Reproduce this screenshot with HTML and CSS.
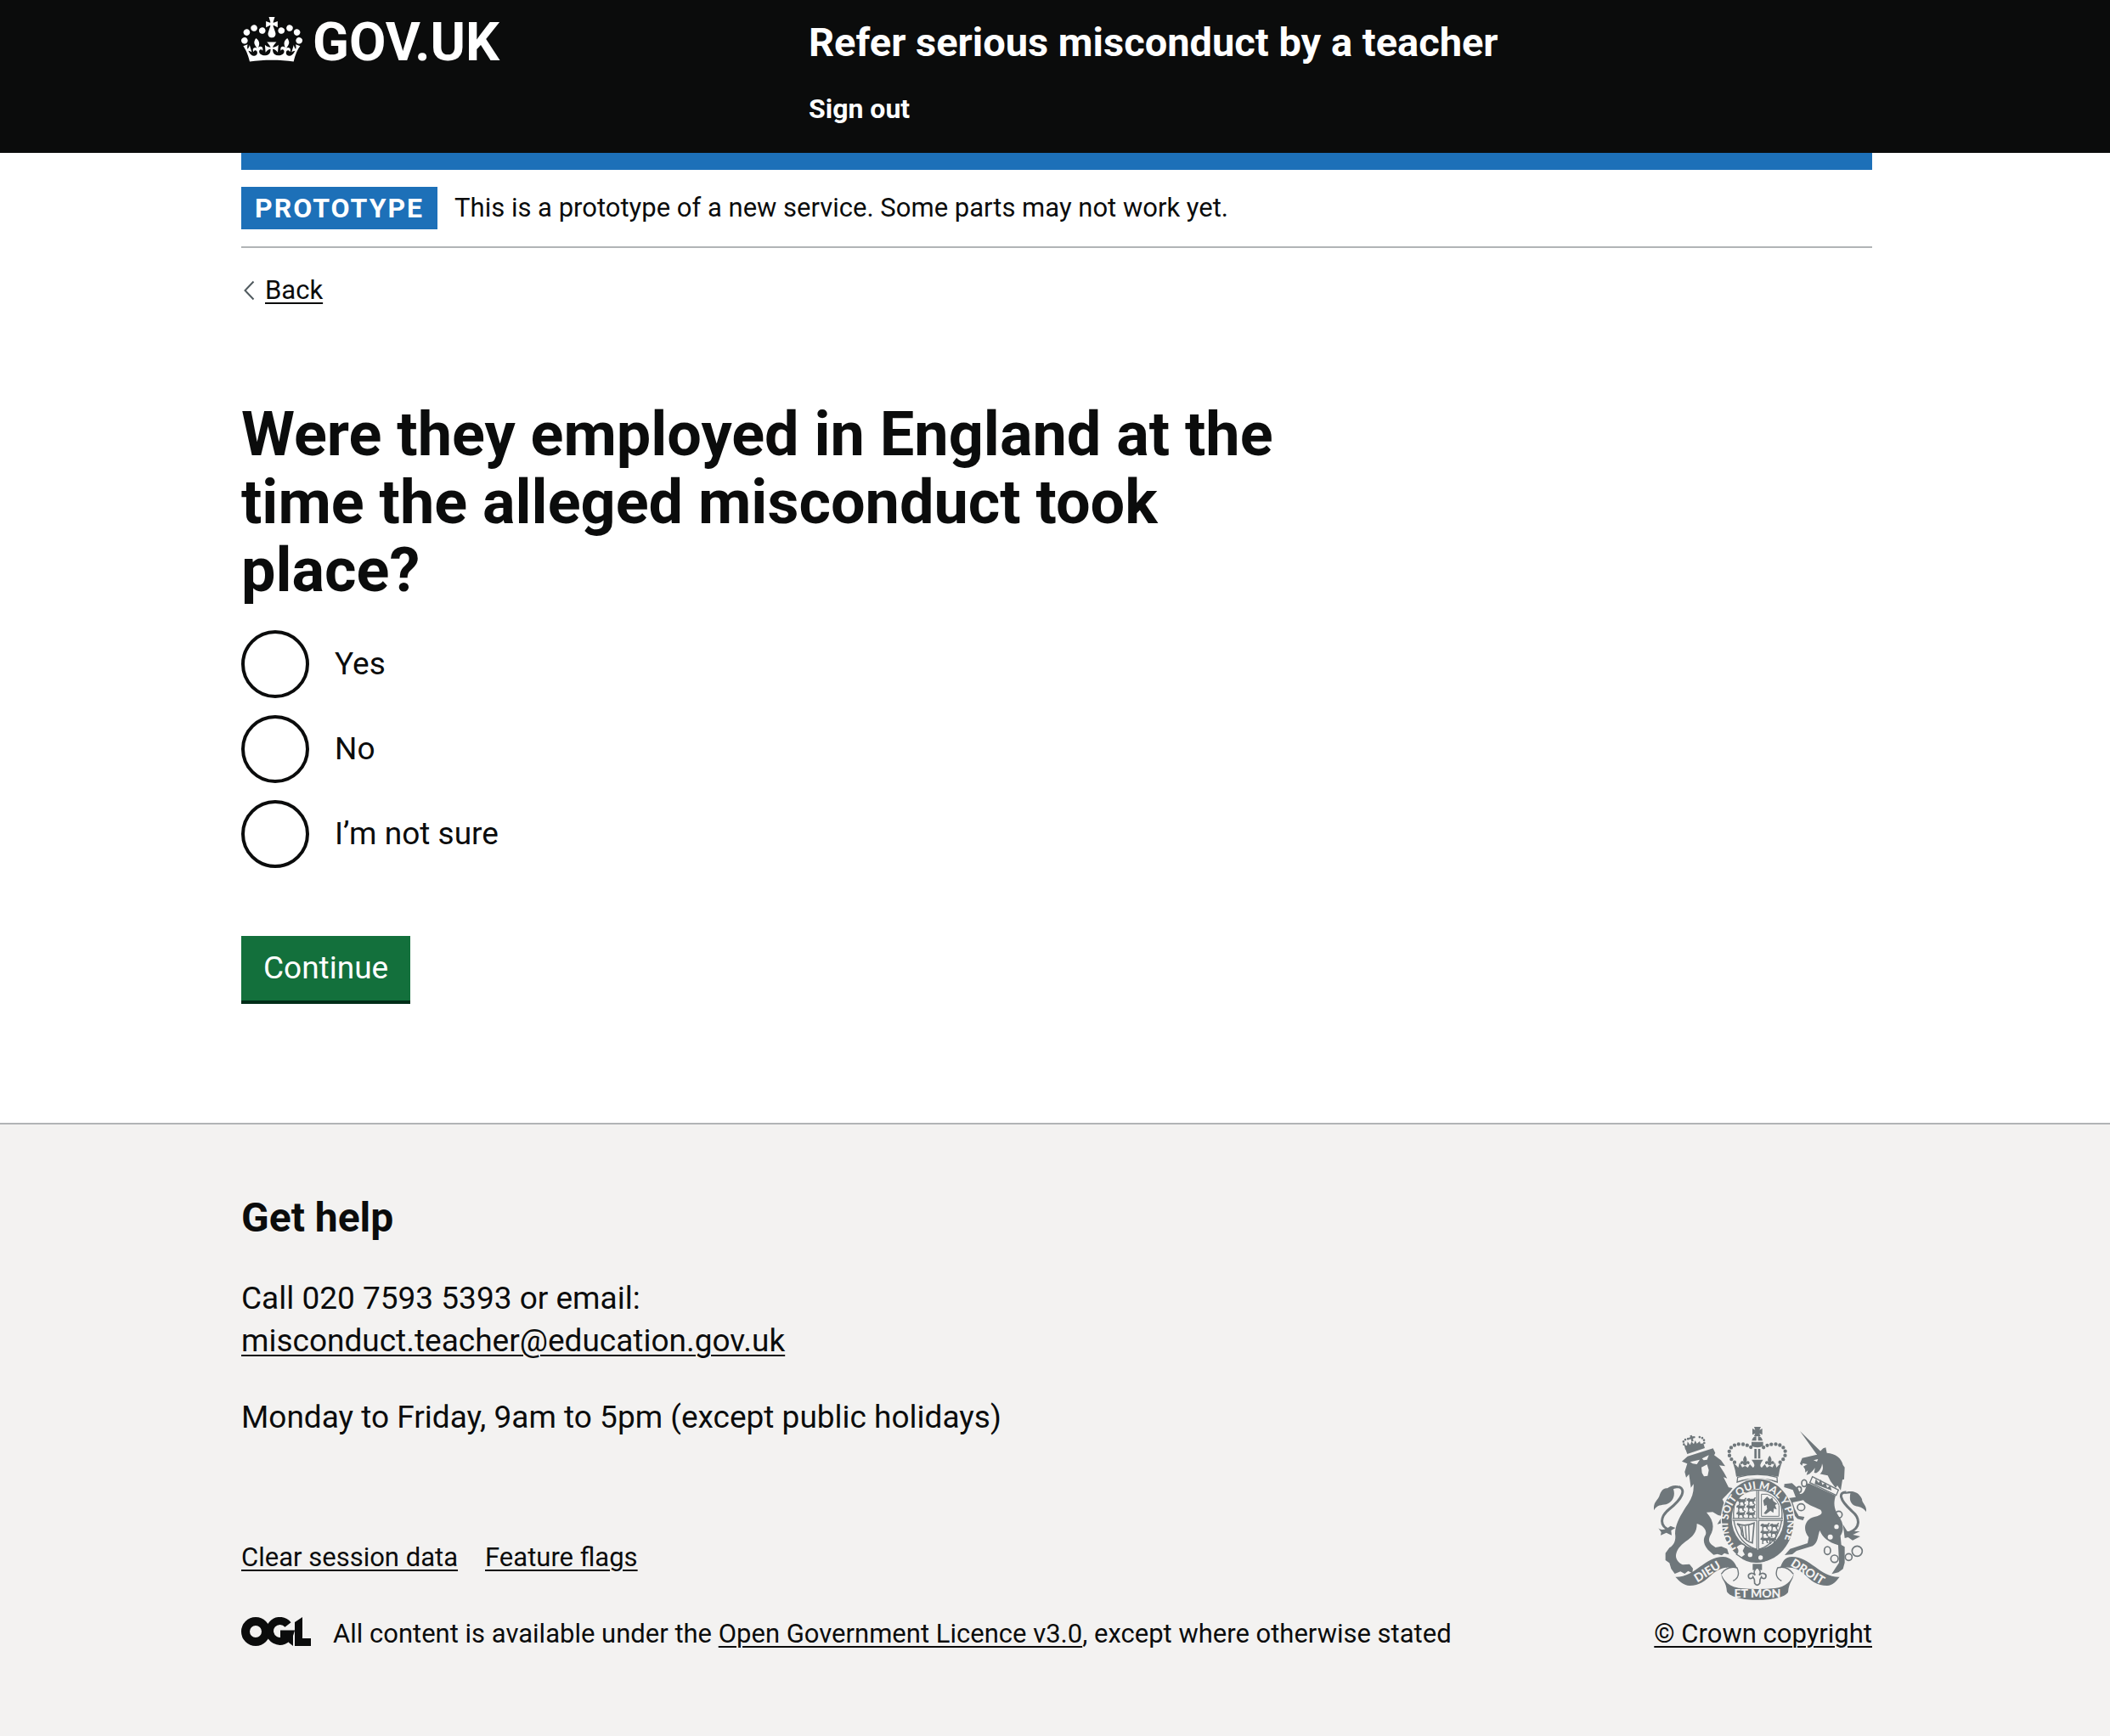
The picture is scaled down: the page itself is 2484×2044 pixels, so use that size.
FILE: index.html
```html
<!DOCTYPE html>
<html lang="en">
<head>
<meta charset="utf-8">
<meta name="viewport" content="width=device-width, initial-scale=1">
<title>Were they employed in England at the time the alleged misconduct took place? – Refer serious misconduct by a teacher – GOV.UK</title>
<link rel="stylesheet" href="styles.css">
</head>
<body>
<header class="header">
  <div class="container header-row">
    <a class="logo" href="#">
      <svg class="logo-crown" viewBox="0 0 132 97" aria-hidden="true"><path fill="currentColor" fill-rule="evenodd" d="M25 30.2c3.5 1.5 7.7-.2 9.1-3.7 1.5-3.6-.2-7.8-3.9-9.2-3.6-1.4-7.6.3-9.1 3.9-1.4 3.5.3 7.5 3.9 9zM9 39.5c3.6 1.5 7.8-.2 9.2-3.7 1.5-3.6-.2-7.8-3.9-9.1-3.6-1.5-7.6.2-9.1 3.8-1.4 3.5.3 7.5 3.8 9zM4.4 57.2c3.5 1.5 7.7-.2 9.1-3.8 1.5-3.6-.2-7.7-3.9-9.1-3.5-1.5-7.6.3-9.1 3.8-1.4 3.5.3 7.6 3.9 9.1zm38.3-21.4c3.5 1.5 7.7-.2 9.1-3.8 1.5-3.6-.2-7.7-3.9-9.1-3.6-1.5-7.6.3-9.1 3.8-1.3 3.6.4 7.7 3.9 9.1zm64.4-5.6c-3.6 1.5-7.8-.2-9.1-3.7-1.5-3.6.2-7.8 3.8-9.2 3.6-1.4 7.7.3 9.2 3.9 1.3 3.5-.4 7.5-3.9 9zm15.9 9.3c-3.6 1.5-7.7-.2-9.1-3.7-1.5-3.6.2-7.8 3.7-9.1 3.6-1.5 7.7.2 9.2 3.8 1.5 3.5-.3 7.5-3.8 9zm4.7 17.7c-3.6 1.5-7.8-.2-9.2-3.8-1.5-3.6.2-7.7 3.9-9.1 3.6-1.5 7.7.3 9.2 3.8 1.3 3.5-.4 7.6-3.9 9.1zM89.3 35.8c-3.6 1.5-7.8-.2-9.2-3.8-1.4-3.6.2-7.7 3.9-9.1 3.6-1.5 7.7.3 9.2 3.8 1.4 3.6-.3 7.7-3.9 9.1zM69.7 17.7l8.9 4.7V9.3l-8.9 2.8c-.2-.3-.5-.6-.9-.9L72.4 0H59.6l3.5 11.2c-.3.3-.6.5-.9.9l-8.8-2.8v13.1l8.8-4.7c.3.3.6.7.9.9l-5 15.4v.1c-.2.8-.4 1.6-.4 2.4 0 4.1 3.1 7.5 7 8.1h.2c.3 0 .7.1 1 .1.4 0 .7 0 1-.1h.2c4-.6 7.1-4.1 7.1-8.1 0-.8-.1-1.7-.4-2.4V34l-5.1-15.4c.4-.2.7-.6 1-.9zM66 92.8c16.9 0 32.8 1.1 47.1 3.2 4-16.9 8.9-26.7 14-33.5l-9.6-3.4c1 4.9 1.1 7.2 0 10.2-1.5-1.4-3-4.3-4.2-8.7L108.6 76c2.8-2 5-3.2 7.5-3.3-4.4 9.4-10 11.9-13.6 11.2-4.3-.8-6.3-4.6-5.6-7.9 1-4.7 5.7-5.9 8-.5 4.3-8.7-3-11.4-7.6-8.8 7.1-7.2 7.9-13.5 2.1-21.1-8 6.1-8.1 12.3-4.5 20.8-4.7-5.4-12.1-2.5-9.5 6.2 3.4-5.2 7.9-2 7.2 3.1-.6 4.3-6.4 7.8-13.5 7.2-10.3-.9-10.9-8-11.2-13.8 2.5-.5 7.1 1.8 11 7.3L80.2 60c-4.1 4.4-8 5.3-12.3 5.4 1.4-4.4 8-11.6 8-11.6H55.5s6.4 7.2 7.9 11.6c-4.2-.1-8-1-12.3-5.4l1.4 16.4c3.9-5.5 8.5-7.7 10.9-7.3-.3 5.8-.9 12.8-11.1 13.8-7.2.6-12.9-2.9-13.5-7.2-.7-5 3.8-8.3 7.1-3.1 2.7-8.7-4.6-11.6-9.4-6.2 3.7-8.5 3.6-14.7-4.6-20.8-5.8 7.6-5 13.9 2.2 21.1-4.7-2.6-11.9.1-7.7 8.8 2.3-5.5 7.1-4.2 8.1.5.7 3.3-1.3 7.1-5.7 7.9-3.5.7-9-1.8-13.5-11.2 2.5.1 4.7 1.3 7.5 3.3l-4.7-15.4c-1.2 4.4-2.7 7.2-4.3 8.7-1.1-3-.9-5.3 0-10.2l-9.5 3.4c5 6.9 9.9 16.7 14 33.5 14.8-2.1 30.8-3.2 47.7-3.2z"/></svg>
      <span class="logo-text">GOV.UK</span>
    </a>
    <div class="header-content">
      <a class="service-name" href="#">Refer serious misconduct by a teacher</a>
      <nav aria-label="Menu"><a class="nav-link" href="#">Sign out</a></nav>
    </div>
  </div>
</header>

<div class="container">
  <div class="header-bar"></div>
  <div class="phase-banner">
    <strong class="tag">PROTOTYPE</strong>
    <span>This is a prototype of a new service. Some parts may not work yet.</span>
  </div>
  <a class="back-link" href="#">
    <svg class="back-chevron" viewBox="0 0 14 24" aria-hidden="true"><path d="M12.500 1.500 2.500 12l10 10.500" fill="none" stroke="#505a5f" stroke-width="2"/></svg>
    <span class="back-text">Back</span>
  </a>

  <main class="main">
    <form class="form">
      <fieldset class="fieldset">
        <legend class="legend"><h1 class="heading">Were they employed in England at the time the alleged misconduct took place?</h1></legend>
        <div class="radios">
          <div class="radio-item"><input class="radio" type="radio" name="employed" id="employed-yes" value="yes"><label class="radio-label" for="employed-yes">Yes</label></div>
          <div class="radio-item"><input class="radio" type="radio" name="employed" id="employed-no" value="no"><label class="radio-label" for="employed-no">No</label></div>
          <div class="radio-item"><input class="radio" type="radio" name="employed" id="employed-unsure" value="unsure"><label class="radio-label" for="employed-unsure">I’m not sure</label></div>
        </div>
      </fieldset>
      <button class="button" type="button">Continue</button>
    </form>
  </main>
</div>

<footer class="footer">
  <div class="container footer-row">
    <div class="footer-main">
      <h2 class="footer-heading">Get help</h2>
      <p class="footer-text">Call 020 7593 5393 or email:<br><a class="link" href="mailto:misconduct.teacher@education.gov.uk">misconduct.teacher@education.gov.uk</a></p>
      <p class="footer-text">Monday to Friday, 9am to 5pm (except public holidays)</p>
      <ul class="footer-links">
        <li><a class="link" href="#">Clear session data</a></li>
        <li><a class="link" href="#">Feature flags</a></li>
      </ul>
      <div class="licence">
        <svg class="ogl" viewBox="0 0 82 34" role="img" aria-label="Open Government Licence">
          <circle cx="17" cy="17" r="12" fill="none" stroke="currentColor" stroke-width="10"/>
          <path d="M55 9A12 12 0 1 0 57 20H46" fill="none" stroke="currentColor" stroke-width="9"/>
          <path d="M52 20h9v14l-5-4zM63 6l9-6v25h10v9H63z" fill="currentColor"/>
        </svg>
        <span>All content is available under the <a class="link" href="#">Open Government Licence v3.0</a>, except where otherwise stated</span>
      </div>
    </div>
    <a class="copyright" href="#">
      <svg class="arms" viewBox="54 60 750 612" aria-hidden="true">
        <defs>
          <path id="garter" d="M346 490A105 124 0 1 1 496 490"/>
          <g id="beast"><path d="M0 4l7-3 4 3h12l5-6 4 3-4 4 2 8-5-1-1 8 5 3h-8l-3-9-8 0-2 8 4 3H3l2-6-1-7-6-2z" fill="#6f777b"/></g>
          <g id="lily"><path d="M0-20C-9-9-7-2-4 3-8-4-17-2-16 6c1 5 7 5 8 0 1 4 3 6 5 8h6c2-2 4-4 5-8 1 5 7 5 8 0C17-2 8-4 4 3 7-2 9-9 0-20z"/></g>
        </defs>
        <g fill="#6f777b">
          <!-- crown over the shield -->
          <path d="M408 60h24l-5 11 10-5v22l-10-5 4 10h-23l4-10-10 5V66l10 5zM400 109c2-10 7-15 16-16v16zM422 93c9 1 15 6 16 16h-16zM399 113h41v14c-8 8-32 8-41 0zM409 138h8v34h-8zM422 138h8v34h-8z"/>
          <path d="M339 185C305 160 318 119 362 121q22 1 36 12M500 185C533 160 520 119 477 121q-22 1-36 12" fill="none" stroke="#6f777b" stroke-width="13" stroke-linecap="round" stroke-dasharray="0 15"/>
          <path d="M334 188q10 5 18 16l5-18 9 17 10-5 10 6 7-12 11 12q12-7-5-28h41q-17 21-5 28l11-12 7 12 10-6 10 5 9-17 5 18q8-11 18-16-8 24-11 48-73-16-149 0-3-24-11-48z"/>
          <use href="#lily" x="376" y="182"/><use href="#lily" x="463" y="182"/>
          <path d="M350 238q70-20 139 0l1 17q-70-24-142 0z" fill="#f3f2f1" stroke="#6f777b" stroke-width="4"/>

          <!-- lion -->
          <path d="M163 131l66-13 5 17-62 21zM161 122l10 5 2-15 9 12 5-12 8 9 5-13 6 11 10-8 4 12 10-5-1 8-64 14zM181 91l7-2 2 5 9-1 1 6-8 2 2 10-7 1-2-9-7 2-1-6 6-3z"/>
          <path d="M160 122q-8-18 20-20M232 117q2-22-25-21" fill="none" stroke="#6f777b" stroke-width="8" stroke-linecap="round" stroke-dasharray="0 10"/>
          <path d="M153 182l20-18 90-28 8 16-4 8 24 18 15 21-21-3 17 26 11 20-13-4 18 36 14 2-7 10-29 30 34 70-5 30-10-18-4 14-12 6-4-18-17 4 10-16 11-12-18-4-19-11-22 1c22 24 28 48 18 72-11 20-13 30 0 42l14 10 20-4 21 9 6 20-16-5-9 8-16-5-13 3-20-18c-17-20-18-38-8-53 5-16-9-34-31-39 0 32-15 46-40 63-20 16-31 29-34 48-1 14 9 27 24 34l24-2 12 15-2 17-15-8-12 10-15-8-20 8-13-18-6-20-14-10v-25l14-19c20-12 23-31 20-50 0-35 25-75 47-107 14-22 20-43 18-68l-9 13-7-48-10 12-5-20 9-29z"/>
          <path d="M182 184l34-8-10 16-15-2zM224 172l24-12-6 16-12 2zM222 203l20-10 6 20-4 20-13 2-7-12z" fill="#f3f2f1"/>
          <path d="M113 426C70 411 77 376 108 351 157 312 167 281 143 272" fill="none" stroke="#6f777b" stroke-width="9"/>
          <path d="M148 270c-20-7-35-2-46 7-13-3-23 8-29 28-8 18-21 20-19 50 12-20 27-18 43-21 20-5 35-27 26-54 9-5 18-3 25-3zM70 418c12 10 28 3 43-8l17 7-15 9 2 17-19-9-20 9 2-11z"/>

          <!-- unicorn -->
          <path d="M570 75l76 74-15 11zM630 158l22-22 9-3 4 19c32 2 52 20 57 43l6 8-2 42-6 2-6 37-12-17-6 9-18-24-10-20-48-10 3-17-8 10-11 11-11 4 5-16-9 7-1-11-6-10 14-8-16-3-3 8-7-7 8-20z"/>
          <path d="M618 178l16-4-4 9zM612 232c22-9 35-22 36-42 8 20-1 36-20 46z" fill="#f3f2f1"/>
          <path d="M604 260l92 43c-8 26-6 45 9 70 22 30 20 52 8 72l3 32 12 7v56l-6 22-16 12-24 6 14-22 12-18-3-62c-36-11-56-29-65-52-7 16-5 43-25 55l-57 17-15 12-27 3 19-22 62-20 4-21c-24-28-13-65 20-72 24-5 31-12 22-25-28-12-51-20-61-34l-38 8 8 24 14 24 20 3-5 12-20-5-32-36-5-36 31-5-10-25-31-10 1-11 27-3 22 20 6 18c14 2 20-18 25-37z"/>
          <path d="M614 236l92 47-8 19-93-45z" fill="#f3f2f1" stroke="#6f777b" stroke-width="4"/>
          <path d="M622 262l4-18 10 14 8-12 5 19 12-8 5 18 11-7 5 17z"/>
          <g fill="none" stroke="#6f777b" stroke-width="5"><ellipse cx="585" cy="259" rx="9" ry="12"/><ellipse cx="567" cy="281" rx="8" ry="10"/><ellipse cx="574" cy="344" rx="13" ry="12"/><circle cx="707" cy="370" r="12"/><ellipse cx="667" cy="497" rx="11" ry="14"/><circle cx="692" cy="526" r="13"/><circle cx="742" cy="520" r="12"/><circle cx="772" cy="499" r="18"/></g>
          <circle cx="699" cy="413" r="8" fill="#f3f2f1"/><circle cx="677" cy="449" r="9" fill="#f3f2f1"/>
          <path d="M745 433C785 417 783 382 754 358 706 315 707 290 733 291" fill="none" stroke="#6f777b" stroke-width="9"/>
          <path d="M722 293c28-10 54-7 67 22 0 15 18 22 15 46-10-18-27-18-39-22-20-9-20-26-17-44-8 0-14 4-26-2zM722 405l15 24 45 0-25 12 26 6-27 14-16-11-12 3z"/>

          <!-- shield and garter -->
          <ellipse cx="421" cy="391" rx="131" ry="151" fill="#f3f2f1"/>
          <ellipse cx="421" cy="391" rx="127" ry="147"/>
          <ellipse cx="421" cy="385" rx="92" ry="106" fill="#f3f2f1"/>
          <path d="M338 338q20-54 83-54 63 0 83 54 8 50-8 88-20 52-75 68-55-16-75-68-16-38-8-88z" fill="none" stroke="#6f777b" stroke-width="4"/>
          <path d="M416 286h10v208h-10zM332 382h178v10H332z"/>
          <path d="M421 286v208M332 387h178" stroke="#f3f2f1" stroke-width="3"/>
          <use href="#beast" x="350" y="312"/><use href="#beast" x="383" y="310"/><use href="#beast" x="347" y="334"/><use href="#beast" x="382" y="334"/><use href="#beast" x="347" y="358"/><use href="#beast" x="382" y="358"/>
          <use href="#beast" x="432" y="400"/><use href="#beast" x="465" y="400"/><use href="#beast" x="432" y="424"/><use href="#beast" x="463" y="424"/><use href="#beast" x="432" y="448"/><use href="#beast" x="457" y="448"/>
          <path d="M434 298h20q32 10 42 40v38h-62z" fill="none" stroke="#6f777b" stroke-width="3"/>
          <path d="M440 320l14-14 10 10 8-6 4 12 14 10-8 4 6 16-10-4-2 16-10-8-16 12-8-2 12-16-2-14-8 4z"/>
          <path d="M348 402q28 12 60-2l-6 70q-24-5-38-30 2-24-16-38z" fill="none" stroke="#6f777b" stroke-width="5"/>
          <path d="M365 410l6 38M377 410l4 48M389 408l2 54" stroke="#6f777b" stroke-width="4"/>
          <path d="M338 486q20-28 40-8l-2 16q60 26 118-2-26 50-80 48-38-2-58-22z"/>
          <path d="M344 484q20-20 34-2l-8 16 8 14-14 10-18-12q10-12-2-26z" fill="#f3f2f1" stroke="#6f777b" stroke-width="4"/>
          <circle cx="394" cy="512" r="8" fill="#f3f2f1"/><circle cx="431" cy="522" r="8" fill="#f3f2f1"/>

          <!-- motto ribbon -->
          <path d="M292 580q24-32 56-22 14 32-14 46M547 580q-24-32-56-22-14 32 14 46" fill="#f3f2f1" stroke="#6f777b" stroke-width="4"/>
          <path d="M130 590c70 2 102-71 168-71 26 1 42 16 50 40-38-8-64 2-86 20-28 26-46 42-82 42-20-1-36-16-50-31zM710 590c-70 2-102-71-168-71-26 1-34 16-42 40 38-8 64 2 84 20 26 26 46 42 82 42 20-1 32-16 44-31z"/>
          <path d="M292 580c2 24 18 26 20 62 22 40 196 38 216 2 4-38 18-42 20-64-10 26-28 46-66 50q-60 6-120 0c-40-4-60-24-70-50z"/>
          <path d="M403 544h33v22h-33z"/>
          <path d="M419 556c-15 12-12 20-7 28-9-12-26-6-24 5 2 10 14 8 16 1l5 9 1 14q9 12 18 0l1-14 5-9c2 7 14 9 16-1 2-11-15-17-24-5 5-8 8-16-7-28z" fill="#f3f2f1" stroke="#6f777b" stroke-width="5"/>
        </g>
        <g class="motto" fill="#f3f2f1">
          <text font-size="37"><textPath href="#garter">HONI SOIT QUI MAL Y PENSE</textPath></text>
          <text font-size="42" text-anchor="middle" transform="translate(250 584) rotate(-32)">DIEU</text>
          <text font-size="42" text-anchor="middle" x="420" y="663">ET MON</text>
          <text font-size="42" text-anchor="middle" transform="translate(590 584) rotate(32)">DROIT</text>
        </g>
      </svg>
      <span class="copyright-text">© Crown copyright</span>
    </a>
  </div>
</footer>
</body>
</html>
```

FILE: styles.css
```css
* {
  box-sizing: border-box;
}

body {
  margin: 0;
  background: #fff;
  color: #0b0c0c;
  font-family: Roboto, "Liberation Sans", sans-serif;
  font-size: 31px;
  line-height: 40px;
}

svg {
  display: block;
  flex: none;
}

.container {
  max-width: 1924px;
  margin: 0 auto;
  padding-left: 4px;
}

.link,
.back-text,
.copyright-text {
  color: inherit;
  text-decoration: underline;
  text-decoration-thickness: 2px;
  text-underline-offset: 4px;
}

/* Header */
.header {
  background: #0b0c0c;
  color: #fff;
}

.header-row {
  display: flex;
  gap: 28px;
  padding-top: 20px;
  padding-bottom: 32px;
}

.logo {
  display: flex;
  gap: 12px;
  width: 33.3333%;
  color: inherit;
  text-decoration: none;
}

.logo-crown {
  width: 72px;
  height: 53px;
}

.logo-text {
  font-size: 63px;
  font-weight: 700;
  line-height: 60px;
}

.header-content {
  display: flex;
  flex-direction: column;
  gap: 28px;
}

.service-name,
.nav-link {
  display: block;
  color: inherit;
  font-weight: 700;
  text-decoration: none;
}

.service-name {
  font-size: 47px;
  line-height: 60px;
}

.nav-link {
  font-size: 32px;
}

.header-bar {
  height: 20px;
  background: #1d70b8;
}

/* Phase banner and back link */
.phase-banner {
  display: flex;
  align-items: center;
  gap: 20px;
  padding: 20px 0;
  border-bottom: 2px solid #b1b4b6;
}

.tag {
  padding: 0 16px;
  background: #1d70b8;
  color: #fff;
  font-size: 32px;
  line-height: 50px;
  letter-spacing: 2px;
}

.back-link {
  display: inline-flex;
  align-items: center;
  gap: 12px;
  margin-top: 30px;
  padding-left: 2px;
  color: inherit;
  text-decoration: none;
  vertical-align: top;
}

.back-chevron {
  width: 14px;
  height: 24px;
}

/* Question */
.main {
  padding: 110px 0 144px;
}

.form {
  max-width: 1250px;
}

.fieldset {
  min-width: 0;
  margin: 0 0 80px;
  padding: 0;
  border: 0;
}

.legend {
  padding: 0;
  margin-bottom: 30px;
}

.heading {
  margin: 0;
  font-size: 72px;
  font-weight: 700;
  line-height: 80px;
}

.radios {
  display: flex;
  flex-direction: column;
  gap: 20px;
}

.radio-item {
  display: flex;
  align-items: center;
  gap: 30px;
}

.radio {
  flex: none;
  width: 80px;
  height: 80px;
  margin: 0;
  appearance: none;
  border: 4px solid #0b0c0c;
  border-radius: 50%;
  background: #fff;
}

.radio:checked {
  background: radial-gradient(#0b0c0c 20px, #fff 21px);
}

.radio-label {
  font-size: 37px;
  line-height: 50px;
}

.button {
  display: block;
  padding: 13px 26px;
  border: 0;
  background: #13703c;
  box-shadow: 0 4px 0 #002d18;
  color: #fff;
  font: inherit;
  font-size: 37px;
  line-height: 50px;
}

/* Footer */
.footer {
  padding: 80px 0 100px;
  border-top: 2px solid #b1b4b6;
  background: #f3f2f1;
}

.footer-row {
  display: flex;
  align-items: flex-end;
  justify-content: space-between;
}

.footer-heading {
  margin: 0 0 40px;
  font-size: 48px;
  line-height: 60px;
}

.footer-text {
  margin: 0 0 40px;
  font-size: 37px;
  line-height: 50px;
}

.footer-links {
  display: flex;
  gap: 32px;
  margin: 120px 0 50px;
  padding: 0;
  list-style: none;
}

.licence {
  display: flex;
  gap: 26px;
}

.ogl {
  width: 82px;
  height: 34px;
}

.copyright {
  display: flex;
  flex-direction: column;
  gap: 20px;
  color: inherit;
  text-decoration: none;
}

.arms {
  width: 250px;
  height: 204px;
}

.motto {
  font-family: Lato, Roboto, sans-serif;
  font-weight: 900;
}
```
